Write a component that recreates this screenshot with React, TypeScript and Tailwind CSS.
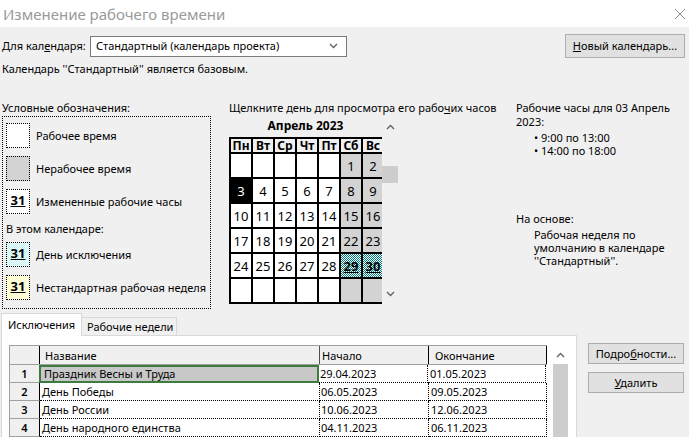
import React from "react";

const WEEKDAYS = ["Пн", "Вт", "Ср", "Чт", "Пт", "Сб", "Вс"];

// april 2023, monday first
const DAYS: (number | null)[] = [
  null, null, null, null, null, 1, 2,
  3, 4, 5, 6, 7, 8, 9,
  10, 11, 12, 13, 14, 15, 16,
  17, 18, 19, 20, 21, 22, 23,
  24, 25, 26, 27, 28, 29, 30,
  null, null, null, null, null, null, null,
];

const EXCEPTIONS = [
  { n: 1, name: "Праздник Весны и Труда", start: "29.04.2023", end: "01.05.2023" },
  { n: 2, name: "День Победы", start: "06.05.2023", end: "09.05.2023" },
  { n: 3, name: "День России", start: "10.06.2023", end: "12.06.2023" },
  { n: 4, name: "День народного единства", start: "04.11.2023", end: "06.11.2023" },
];

function Chevron({ up }: { up?: boolean }) {
  return (
    <svg width="9" height="6" viewBox="0 0 9 6" fill="none">
      <path d={up ? "M1 5 L4.5 1.5 L8 5" : "M1 1 L4.5 4.5 L8 1"} stroke="#606060" strokeWidth="1.3" />
    </svg>
  );
}

function LegendBox({ kind }: { kind: string }) {
  let cls = "bg-white";
  if (kind === "off") cls = "bg-[#d3d3d3]";
  if (kind === "exc") cls = "bg-[repeating-conic-gradient(#b8f4f4_0_25%,#ffffff_0_50%)] bg-[length:2px_2px]";
  if (kind === "week") cls = "bg-[repeating-conic-gradient(#ffffb0_0_25%,#ffffff_0_50%)] bg-[length:2px_2px]";
  return (
    <div className={`w-[24px] h-[25px] border border-dotted border-black shrink-0 flex justify-center ${cls}`}>
      {kind !== "work" && kind !== "off" && (
        <span className="text-[13px] font-bold underline leading-[16px] mt-[2px]">31</span>
      )}
    </div>
  );
}

function LegendRow({ kind, label, top }: { kind: string; label: string; top: string }) {
  return (
    <div className={`flex items-center gap-[6px] ${top}`}>
      <LegendBox kind={kind} />
      <span className="whitespace-nowrap">{label}</span>
    </div>
  );
}

function WinButton({ children, className }: { children: React.ReactNode; className: string }) {
  return (
    <div className={`bg-[#e1e1e1] border border-[#adadad] flex items-center justify-center whitespace-nowrap ${className}`}>
      {children}
    </div>
  );
}

export default function App() {
  return (
    <div className="w-[689px] h-[437px] overflow-hidden bg-[#f0f0f0] text-[11px] text-black font-['Noto_Sans',sans-serif] leading-[14px]">
      {/* Title bar */}
      <div className="h-[27px] bg-white flex items-center justify-between pl-[3px] pr-[3px]">
        <span className="text-[15px] text-[#9a9a9a] leading-[18px]">Изменение рабочего времени</span>
        <svg width="12" height="12" viewBox="0 0 12 12">
          <path d="M1 1 L11 11 M11 1 L1 11" stroke="#8a8a8a" strokeWidth="1" />
        </svg>
      </div>

      {/* Calendar selector */}
      <div className="mt-[7px] h-[24px] flex items-center pl-[2px] pr-[4px]">
        <span className="w-[88px] whitespace-nowrap">
          Для кал<u>е</u>ндаря:
        </span>
        <div className="w-[257px] h-[21px] bg-white border border-[#7a7a7a] flex items-center justify-between pl-[5px] pr-[8px]">
          <span className="whitespace-nowrap">Стандартный (календарь проекта)</span>
          <Chevron />
        </div>
        <WinButton className="ml-auto w-[120px] h-[24px]">
          <span>
            <u>Н</u>овый календарь...
          </span>
        </WinButton>
      </div>
      <div className="mt-[4px] pl-[2px] whitespace-nowrap">Календарь ''Стандартный'' является базовым.</div>

      {/* Main area */}
      <div className="mt-[25px] h-[212px] flex">
        {/* Legend */}
        <div className="ml-[2px] w-[209px] flex flex-col">
          <div className="whitespace-nowrap">Условные обозначения:</div>
          <div className="mt-[1px] h-[193px] border border-dotted border-black pl-[3px] pt-[6px]">
            <LegendRow kind="work" label="Рабочее время" top="" />
            <LegendRow kind="off" label="Нерабочее время" top="mt-[8px]" />
            <LegendRow kind="changed" label="Измененные рабочие часы" top="mt-[8px]" />
            <div className="mt-[8px] whitespace-nowrap">В этом календаре:</div>
            <LegendRow kind="exc" label="День исключения" top="mt-[6px]" />
            <LegendRow kind="week" label="Нестандартная рабочая неделя" top="mt-[8px]" />
          </div>
        </div>

        {/* Calendar */}
        <div className="ml-[18px] w-[287px] flex flex-col">
          <div className="whitespace-nowrap">
            Щелкните день для просмотра его рабо<u>ч</u>их часов
          </div>
          <div className="mt-[3px] flex">
            <div className="w-[153px] overflow-hidden">
              <div className="h-[19px] text-center text-[12px] font-bold leading-[16px] whitespace-nowrap">Апрель 2023</div>
              <div className="w-[156px] grid grid-cols-[repeat(7,22px)] border-l-2 border-t-2 border-black bg-white">
                {WEEKDAYS.map((d) => (
                  <div
                    key={d}
                    className="h-[15px] border-r-2 border-b-2 border-black bg-[#f0f0f0] text-[12px] font-bold leading-[13px] text-center"
                  >
                    {d}
                  </div>
                ))}
                {DAYS.map((d, i) => {
                  const col = i % 7;
                  const weekend = col >= 5;
                  const selected = d === 3;
                  const holiday = d === 29 || d === 30;
                  let bg = "bg-white";
                  if (weekend) bg = "bg-[#d3d3d3]";
                  if (selected) bg = "bg-black text-white";
                  if (holiday) bg = "bg-[repeating-conic-gradient(#008080_0_25%,#ffffff_0_50%)] bg-[length:2px_2px]";
                  return (
                    <div
                      key={i}
                      className={`h-[25px] border-r-2 border-b-2 border-black flex items-center justify-center text-[13px] ${bg}`}
                    >
                      {d !== null && (
                        <span className={holiday ? "font-bold underline" : ""}>{d}</span>
                      )}
                    </div>
                  );
                })}
              </div>
            </div>
            <div className="w-[16px] flex flex-col items-center">
              <div className="mt-[5px] h-[8px] flex items-center">
                <Chevron up />
              </div>
              <div className="mt-[35px] w-[16px] h-[17px] bg-[#cdcdcd]" />
              <div className="mt-[107px] h-[8px] flex items-center">
                <Chevron />
              </div>
            </div>
          </div>
        </div>

        {/* Working hours info */}
        <div className="w-[160px] flex flex-col">
          <div>Рабочие часы для 03 Апрель 2023:</div>
          <div className="mt-[2px] pl-[18px] leading-[13px]">
            <div>• 9:00 по 13:00</div>
            <div>• 14:00 по 18:00</div>
          </div>
          <div className="mt-[55px]">На основе:</div>
          <div className="mt-[2px] pl-[18px] leading-[13px]">
            Рабочая неделя по умолчанию в календаре ''Стандартный''.
          </div>
        </div>
      </div>

      {/* Tabs + exceptions table */}
      <div className="flex">
        <div className="ml-[1px] w-[576px] flex flex-col">
          <div className="h-[22px] flex items-end">
            <div className="relative z-10 -mb-px h-[23px] w-[81px] bg-white border border-b-0 border-[#d9d9d9] pl-[6px] flex items-center whitespace-nowrap">
              Исключения
            </div>
            <div className="h-[18px] w-[95px] bg-[#f0f0f0] border border-l-0 border-b-0 border-[#d9d9d9] pl-[5px] flex items-center whitespace-nowrap">
              Рабочие недели
            </div>
          </div>
          <div className="h-[110px] bg-white border border-b-0 border-[#d9d9d9] pl-[7px] pt-[9px]">
            <div className="flex">
              <div className="w-[538px] border-l border-t border-[#a0a0a0]">
                <div className="h-[19px] flex bg-[#f0f0f0] border-b border-[#a0a0a0]">
                  <div className="w-[30px] border-r border-black" />
                  <div className="w-[280px] border-r border-[#505050] pl-[5px] flex items-end pb-[1px]">Название</div>
                  <div className="w-[109px] border-r border-black pl-[2px] flex items-end pb-[1px]">Начало</div>
                  <div className="w-[118px] border-r border-black pl-[6px] flex items-end pb-[1px]">Окончание</div>
                </div>
                {EXCEPTIONS.map((e) => (
                  <div key={e.n} className="h-[18px] flex">
                    <div className="w-[30px] bg-[#f0f0f0] border-r border-black border-b border-b-[#a0a0a0] flex items-center justify-center font-semibold">
                      {e.n}
                    </div>
                    {e.n === 1 ? (
                      <div className="w-[280px] bg-[#c8c8c8] border-2 border-[#3e7b3e] -ml-px pl-[3px] flex items-center whitespace-nowrap">
                        {e.name}
                      </div>
                    ) : (
                      <div className="w-[280px] border-r border-b border-dotted border-black pl-[2px] flex items-center whitespace-nowrap">
                        {e.name}
                      </div>
                    )}
                    <div className="w-[109px] border-r border-b border-dotted border-black pl-[1px] flex items-center">
                      {e.start}
                    </div>
                    <div className="w-[118px] border-r border-black border-b border-b-black border-dotted pl-[2px] flex items-center">
                      {e.end}
                    </div>
                  </div>
                ))}
              </div>
              <div className="ml-[6px] w-[15px] flex flex-col">
                <div className="h-[19px] flex items-center justify-center">
                  <Chevron up />
                </div>
                <div className="flex-1 h-[80px] bg-[#cdcdcd]" />
              </div>
            </div>
          </div>
        </div>

        {/* Side buttons */}
        <div className="ml-[11px] pt-[30px] flex flex-col gap-[8px]">
          <WinButton className="w-[96px] h-[21px]">
            <span>
              Подро<u>б</u>ности...
            </span>
          </WinButton>
          <WinButton className="w-[96px] h-[21px]">
            <span>
              <u>У</u>далить
            </span>
          </WinButton>
        </div>
      </div>
    </div>
  );
}
